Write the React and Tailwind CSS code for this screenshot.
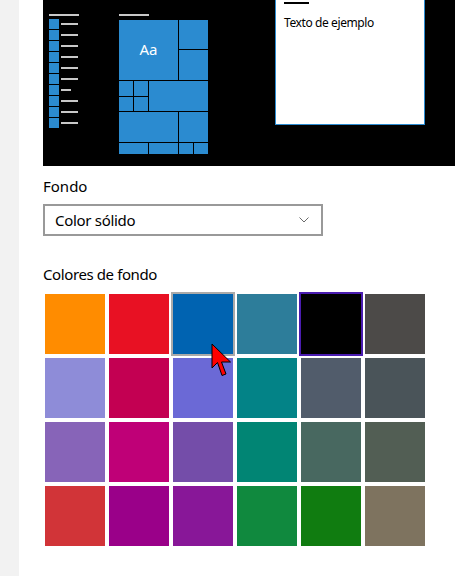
import React from 'react';

const swatches = [
  '#ff8c00', '#e81123', '#0063b1', '#2d7d9a', '#000000', '#4c4a48',
  '#8e8cd8', '#c30052', '#6b69d6', '#038387', '#515c6b', '#4a5459',
  '#8764b8', '#bf0077', '#744da9', '#018574', '#486860', '#525e54',
  '#d13438', '#9a0089', '#881798', '#10893e', '#107c10', '#7e735f',
];

// tiles of the small start menu drawing
const tiles = [
  'col-span-4 row-span-2',
  'col-span-2',
  'col-span-2',
  'col-span-1',
  'col-span-1',
  'col-span-4 row-span-2',
  'col-span-1',
  'col-span-1',
  'col-span-4',
  'col-span-2',
  'col-span-2',
  'col-span-2',
  'col-span-1',
  'col-span-1',
];

const listLines = [17, 17, 17, 17, 17, 17, 10, 17, 17, 17];

const Preview = () => (
  <div className="flex w-[412px] h-[166px] bg-black items-start">
    {/* app list */}
    <div className="ml-[6px] mt-[14px] flex flex-col">
      <div className="w-[30px] h-[2px] bg-[#c8c8c8] mb-[3px]" />
      <div className="flex flex-col gap-[1px]">
        {listLines.map((w, i) => (
          <div key={i} className="flex items-center gap-[2px]">
            <div className="w-[10px] h-[10px] bg-[#2b8bd0]" />
            <div className="h-[2px] bg-[#c8c8c8]" style={{ width: w }} />
          </div>
        ))}
      </div>
    </div>

    {/* tiles */}
    <div className="ml-[40px] mt-[14px] flex flex-col">
      <div className="w-[30px] h-[2px] bg-[#c8c8c8] mb-[4px]" />
      <div className="grid grid-cols-[14px_14px_14px_14px_14px_14px] grid-rows-[29px_30px_15px_14px_30px_11px] gap-[1px]">
        {tiles.map((c, i) => (
          <div key={i} className={`${c} bg-[#2b8bd0] flex items-center justify-center`}>
            {i === 0 && (
              <span className="text-white text-[15px] leading-none -mt-[1px]">Aa</span>
            )}
          </div>
        ))}
      </div>
    </div>

    {/* sample window */}
    <div className="ml-[67px] w-[150px] h-[125px] bg-white border-x border-b border-[#2b8bd0] px-[8px]">
      <div className="mt-[2px] w-[25px] h-[2px] bg-black" />
      <div className="mt-[11px] text-[12px] leading-[16px] tracking-[-0.4px] text-black">Texto de ejemplo</div>
    </div>
  </div>
);

const Cursor = () => (
  <svg className="absolute left-[211px] top-[343px]" width="24" height="36" viewBox="0 0 24 36">
    <path
      d="M1 1 L1 25 L6.5 19.5 L11 32.5 L15 31 L10.5 19 L19.5 19 Z"
      fill="#ff0000"
      stroke="#000"
      strokeWidth="1"
      strokeLinejoin="miter"
    />
  </svg>
);

export default function App() {
  return (
    <div
      className="relative flex h-[576px] w-[462px] overflow-hidden bg-white text-black"
      style={{ fontFamily: '"Noto Sans", "Open Sans", sans-serif' }}
    >
      <div className="w-[19px] shrink-0 bg-[#f2f2f2]" />
      <main className="flex-1 pl-[24px]">
        <Preview />

        <div className="mt-[10px] text-[15px] leading-[20px]">Fondo</div>

        <div className="mt-[8px] w-[280px] h-[32px] border-2 border-[#999999] flex items-center justify-between pl-[10px] pr-[12px]">
          <span className="text-[15px] leading-[20px] tracking-[-0.3px]">Color sólido</span>
          <svg width="10" height="6" viewBox="0 0 10 6">
            <path d="M0.5 0.5 L5 5 L9.5 0.5" fill="none" stroke="#6b6b6b" strokeWidth="1" />
          </svg>
        </div>

        <div className="mt-[28px] text-[15px] leading-[20px] tracking-[-0.4px]">Colores de fondo</div>

        <div className="mt-[10px] ml-[2px] grid grid-cols-[60px_60px_60px_60px_60px_60px] gap-[4px]">
          {swatches.map((c, i) => (
            <div
              key={i}
              className={`h-[60px] ${
                i === 2 ? 'outline-2 outline-[#aaaaaa]' : i === 4 ? 'outline-2 outline-[#4a1cb0]' : ''
              }`}
              style={{ backgroundColor: c }}
            />
          ))}
        </div>
      </main>
      <Cursor />
    </div>
  );
}
